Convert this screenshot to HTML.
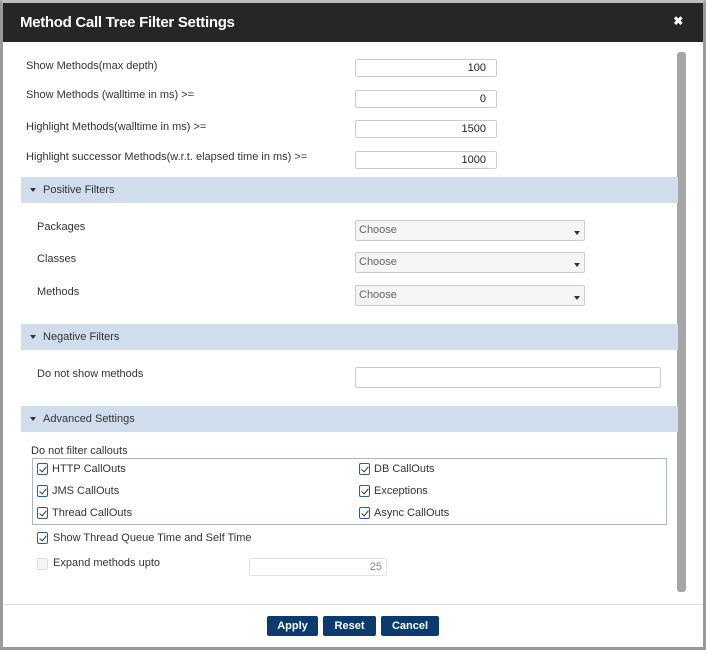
<!DOCTYPE html><html><head><style>
*{margin:0;padding:0;box-sizing:border-box}
body{width:706px;height:650px;overflow:hidden;background:#fff;font-family:"Liberation Sans",sans-serif;font-size:11px;color:#333;position:relative}
.a{position:absolute}
.frame{left:0;top:0;width:706px;height:650px;border:3px solid #9a9a9a;border-top:3px solid #bcbcbc}
.hdr{left:3px;top:3px;width:700px;height:39px;background:#262626;color:#fff;font-size:15px;font-weight:bold;padding:11px 0 0 17px;letter-spacing:-.3px}
.inp{height:18px;border:1px solid #ccc;border-radius:2px;text-align:right;padding:2px 10px 0 0;font-size:11px;color:#222}
.sec{left:21px;width:657px;height:26px;background:#cfdded;color:#333;padding:7px 0 0 22px;font-size:11px}
.sec:before{content:"";position:absolute;left:9px;top:11px;border-left:3px solid transparent;border-right:3px solid transparent;border-top:4px solid #333}
.sel{left:355px;width:230px;height:21px;border:1px solid #ccc;background:#f5f5f5;color:#666;padding:3px 0 0 3px;border-radius:2px}
.sel:after{content:"";position:absolute;right:4px;top:10px;border-left:3px solid transparent;border-right:3px solid transparent;border-top:4px solid #333}
.cb{width:11px;height:12px;border:1px solid #2a5d9a;border-radius:2px;background:#fff}
.cb:after{content:"";position:absolute;left:3px;top:1px;width:3px;height:6px;border:solid #333;border-width:0 1.5px 1.5px 0;transform:rotate(40deg)}
.btn{top:616px;height:20px;background:#0b3a6e;color:#fff;font-weight:bold;font-size:11px;text-align:center;padding-top:4px;border-radius:2px}
</style></head><body>
<div class="a frame"></div>
<div class="a hdr">Method Call Tree Filter Settings<span style="position:absolute;right:20px;top:11px;font-size:12px">✖</span></div>
<div class="a" style="left:677px;top:52px;width:9px;height:540px;background:#a6a6a6;border-radius:3px"></div>
<div class="a" style="left:26px;top:60px">Show Methods(max depth)</div>
<div class="a inp" style="left:355px;top:59px;width:142px">100</div>
<div class="a" style="left:26px;top:89px">Show Methods (walltime in ms) &gt;=</div>
<div class="a inp" style="left:355px;top:90px;width:142px">0</div>
<div class="a" style="left:26px;top:121px">Highlight Methods(walltime in ms) &gt;=</div>
<div class="a inp" style="left:355px;top:120px;width:142px">1500</div>
<div class="a" style="left:26px;top:151px">Highlight successor Methods(w.r.t. elapsed time in ms) &gt;=</div>
<div class="a inp" style="left:355px;top:151px;width:142px">1000</div>
<div class="a sec" style="top:177px">Positive Filters</div>
<div class="a" style="left:37px;top:221px">Packages</div>
<div class="a sel" style="top:220px">Choose</div>
<div class="a" style="left:37px;top:253px">Classes</div>
<div class="a sel" style="top:252px">Choose</div>
<div class="a" style="left:37px;top:286px">Methods</div>
<div class="a sel" style="top:285px">Choose</div>
<div class="a sec" style="top:324px">Negative Filters</div>
<div class="a" style="left:37px;top:368px">Do not show methods</div>
<div class="a inp" style="left:355px;top:367px;width:306px;height:21px"></div>
<div class="a sec" style="top:406px">Advanced Settings</div>
<div class="a" style="left:31px;top:445px">Do not filter callouts</div>
<div class="a" style="left:32px;top:458px;width:635px;height:67px;border:1px solid #a9b8c8"></div>
<div class="a cb" style="left:37px;top:463px"></div><div class="a" style="left:52px;top:463px">HTTP CallOuts</div>
<div class="a cb" style="left:359px;top:463px"></div><div class="a" style="left:374px;top:463px">DB CallOuts</div>
<div class="a cb" style="left:37px;top:485px"></div><div class="a" style="left:52px;top:485px">JMS CallOuts</div>
<div class="a cb" style="left:359px;top:485px"></div><div class="a" style="left:374px;top:485px">Exceptions</div>
<div class="a cb" style="left:37px;top:507px"></div><div class="a" style="left:52px;top:507px">Thread CallOuts</div>
<div class="a cb" style="left:359px;top:507px"></div><div class="a" style="left:374px;top:507px">Async CallOuts</div>
<div class="a cb" style="left:37px;top:532px"></div><div class="a" style="left:53px;top:532px">Show Thread Queue Time and Self Time</div>
<div class="a" style="left:37px;top:558px;width:11px;height:12px;border:1px solid #ddd;background:#f3f3f3;border-radius:2px"></div>
<div class="a" style="left:53px;top:557px">Expand methods upto</div>
<div class="a inp" style="left:249px;top:558px;width:138px;color:#888;border-color:#e3e3e3;padding-right:4px">25</div>
<div class="a" style="left:3px;top:604px;width:700px;height:1px;background:#ddd"></div>
<div class="a btn" style="left:267px;width:51px">Apply</div>
<div class="a btn" style="left:323px;width:53px">Reset</div>
<div class="a btn" style="left:381px;width:58px">Cancel</div>
</body></html>
